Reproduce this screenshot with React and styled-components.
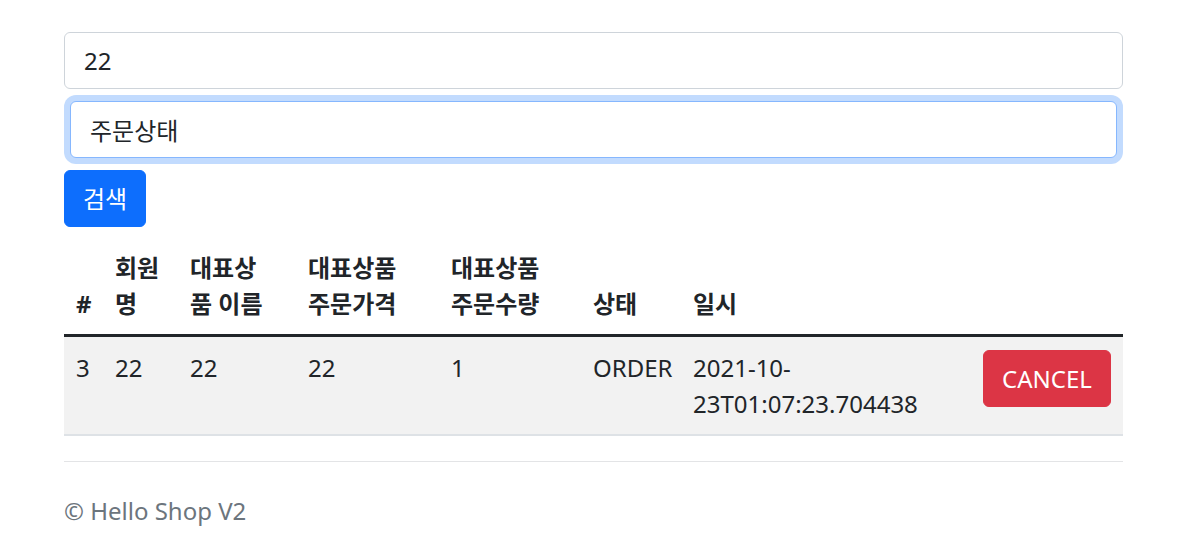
import React from 'react'
import styled, { createGlobalStyle } from 'styled-components'

const GlobalStyle = createGlobalStyle`
  body {
    margin: 0;
    background: #fff;
    color: #212529;
    font-family: "Noto Sans", "Noto Sans CJK KR", sans-serif;
    font-size: 24px;
    line-height: 1.5;
  }
  * { box-sizing: border-box; }
`

const Container = styled.div`
  width: 1059px;
  margin: 0 auto;
  padding-top: 32px;
`

const Form = styled.form`
  display: flex;
  flex-direction: column;
  align-items: flex-start;
  gap: 12px;
`

const Input = styled.input`
  display: block;
  width: ${p => (p.$focused ? 'calc(100% - 12px)' : '100%')};
  margin-left: ${p => (p.$focused ? '6px' : '0')};
  height: 57px;
  padding: 9px 19px;
  font: inherit;
  color: #212529;
  background: #fff;
  border: 1.5px solid ${p => (p.$focused ? '#86b7fe' : '#ced4da')};
  border-radius: 6px;
  outline: none;
  box-shadow: ${p => (p.$focused ? '0 0 0 6px rgba(13,110,253,.25)' : 'none')};
`

const Button = styled.button`
  font: inherit;
  color: #fff;
  background: ${p => p.$bg};
  border: 1.5px solid ${p => p.$bg};
  border-radius: 6px;
  padding: 9px 18px;
  height: 57px;
  cursor: pointer;
`

const Table = styled.table`
  width: 100%;
  margin-top: 11px;
  border-collapse: collapse;
  table-layout: fixed;
  vertical-align: top;
`

const Th = styled.th`
  width: ${p => p.$w}px;
  padding: 12px;
  text-align: left;
  vertical-align: bottom;
  font-weight: 700;
  border-bottom: 3px solid #212529;
`

const Row = styled.tr`
  background: #f2f2f2;
  border-bottom: 2px solid #dee2e6;
`

const Td = styled.td`
  padding: 13px 12px 12px;
  vertical-align: top;
`

const Hr = styled.hr`
  margin: 25px 0 0;
  border: 0;
  border-top: 1.5px solid #e3e4e6;
`

const Footer = styled.footer`
  margin-top: 31px;
  color: #6c757d;
`

const cols = [
  { w: 39, label: ['#'] },
  { w: 75, label: ['회원', '명'] },
  { w: 118, label: ['대표상', '품 이름'] },
  { w: 143, label: ['대표상품', '주문가격'] },
  { w: 142, label: ['대표상품', '주문수량'] },
  { w: 100, label: ['상태'] },
  { w: 290, label: ['일시'] },
  { w: 152, label: [] },
]

const App = () => {
  return (
    <>
      <GlobalStyle />
      <Container>
        <Form onSubmit={e => e.preventDefault()}>
          <Input value="22" readOnly />
          <Input value="주문상태" readOnly $focused />
          <Button type="submit" $bg="#0d6efd">검색</Button>
        </Form>
        <Table>
          <thead>
            <tr>
              {cols.map((c, i) => (
                <Th key={i} $w={c.w}>
                  {c.label.map((l, j) => (
                    <React.Fragment key={j}>
                      {j > 0 && <br />}
                      {l}
                    </React.Fragment>
                  ))}
                </Th>
              ))}
            </tr>
          </thead>
          <tbody>
            <Row>
              <Td>3</Td>
              <Td>22</Td>
              <Td>22</Td>
              <Td>22</Td>
              <Td>1</Td>
              <Td>ORDER</Td>
              <Td>2021-10-23T01:07:23.704438</Td>
              <Td>
                <Button $bg="#dc3545">CANCEL</Button>
              </Td>
            </Row>
          </tbody>
        </Table>
        <Hr />
        <Footer>© Hello Shop V2</Footer>
      </Container>
    </>
  )
}

export default App
